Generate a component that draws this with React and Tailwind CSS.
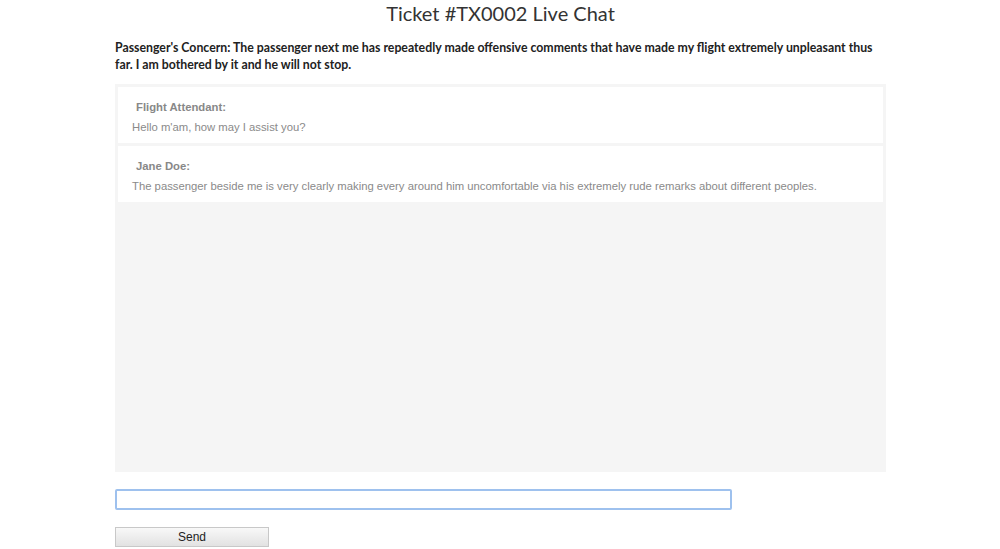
export default function App() {
  const messages = [
    { name: "Flight Attendant:", text: "Hello m'am, how may I assist you?" },
    {
      name: "Jane Doe:",
      text: "The passenger beside me is very clearly making every around him uncomfortable via his extremely rude remarks about different peoples.",
    },
  ];

  return (
    <div className="w-[1000px] h-[549px] bg-white overflow-hidden">
      <div className="w-[771px] ml-[115px]">
        <h1 className="text-center text-[20px] leading-[26px] text-[#333] font-['Lato',sans-serif]">
          Ticket #TX0002 Live Chat
        </h1>
        <p className="mt-[13px] text-[12.3px] leading-[17px] font-bold text-[#222] font-['Lato',sans-serif]">
          Passenger's Concern: The passenger next me has repeatedly made offensive comments that have made my flight
          extremely unpleasant thus far. I am bothered by it and he will not stop.
        </p>

        <div className="mt-[11px] h-[388px] bg-[#f5f5f5] p-[3px] flex flex-col gap-[3px]">
          {messages.map((m) => (
            <div key={m.name} className="bg-white h-[56px] pt-[13px] pl-[18px] font-['Liberation_Sans',sans-serif]">
              <div className="text-[11.3px] leading-[14px] font-bold text-[#888]">{m.name}</div>
              <div className="mt-[6px] -ml-[4px] text-[11.3px] leading-[14px] text-[#8a8a8a]">{m.text}</div>
            </div>
          ))}
        </div>

        <input
          autoFocus
          className="mt-[17px] block w-[617px] h-[21px] border-2 border-[#9ec1ee] rounded-[2px] outline-none px-[2px] text-[12px]"
        />

        <button className="mt-[17px] block w-[154px] h-[20px] border border-[#c8c8c8] bg-gradient-to-b from-[#f8f8f8] to-[#e2e2e2] text-[12px] text-[#222] font-['Liberation_Sans',sans-serif]">
          Send
        </button>
      </div>
    </div>
  );
}
